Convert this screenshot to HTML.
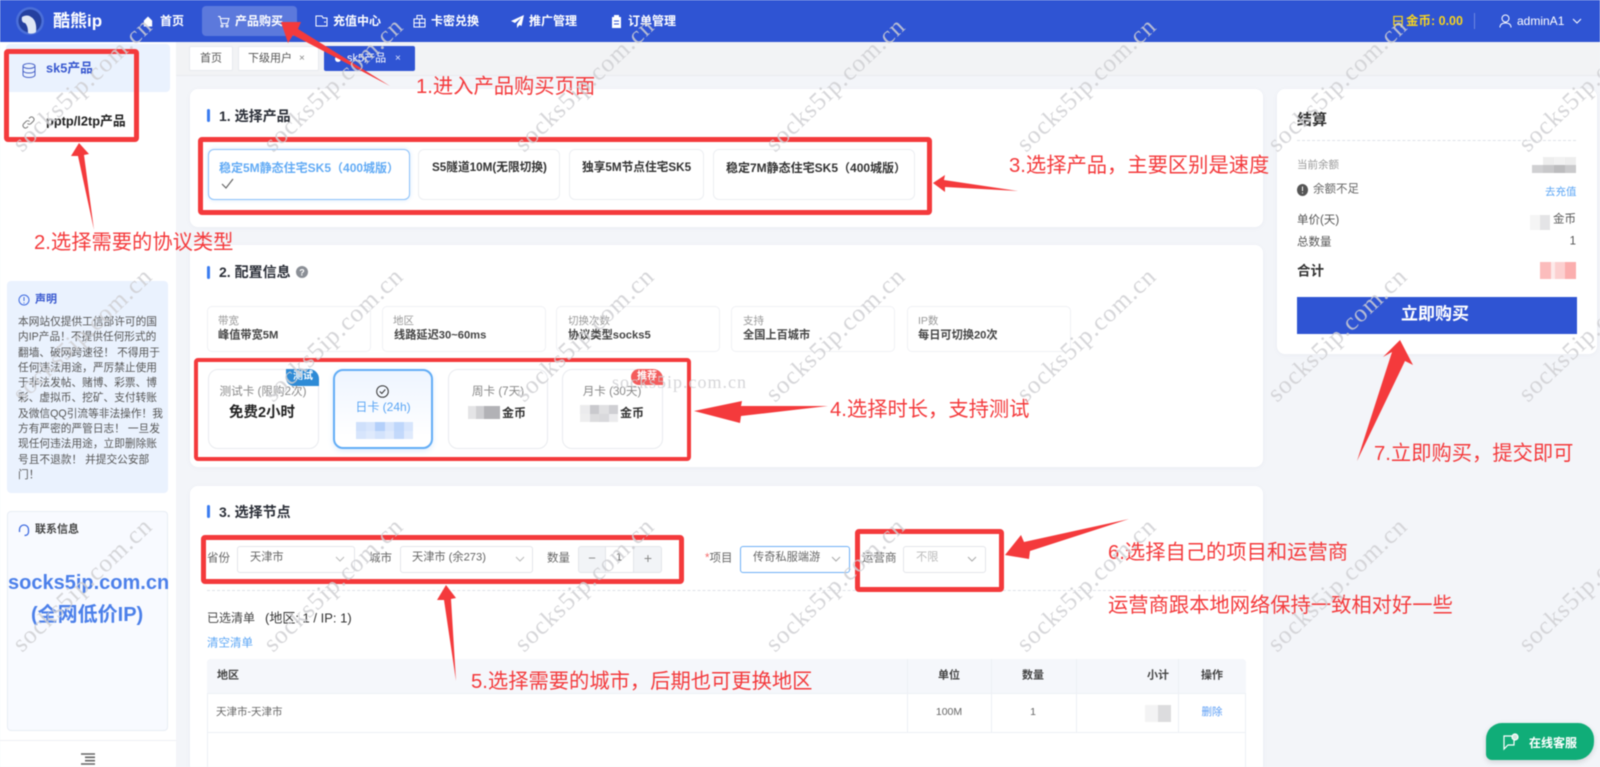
<!DOCTYPE html>
<html lang="zh-CN"><head><meta charset="utf-8"><title>酷熊ip</title>
<style>
*{box-sizing:border-box;margin:0;padding:0}
html,body{width:1600px;height:767px;overflow:hidden;background:#f3f5f9}
body{font-family:"Liberation Sans","Noto Sans CJK SC",sans-serif;color:#333}
#w{position:relative;width:1600px;height:767px;overflow:hidden;filter:blur(.6px)}
.b{position:absolute}
.t{position:absolute;white-space:nowrap;line-height:1;transform:translateY(-50%)}
.c{transform:translate(-50%,-50%)}
.r{transform:translate(-100%,-50%)}
.n{color:#fff;font-size:12px;font-weight:700;top:21px}
.card{position:absolute;background:#fff;border-radius:8px;box-shadow:0 1px 6px rgba(40,60,110,.04)}
.bar{position:absolute;width:3px;height:13px;background:#3b7cf0;border-radius:2px}
.h{font-size:14px;font-weight:700;color:#2b2f38}
.p{position:absolute;background:#fff;border:1px solid #eceef2;border-radius:6px;top:149px;height:51px}
.pt{font-size:11.7px;font-weight:700;color:#333;top:168px}
.i{position:absolute;top:306px;height:46px;width:164px;border:1px solid #f0f1f4;border-radius:5px;background:#fff}
.il{font-size:10.5px;color:#999;top:321px}.iv{font-size:11.2px;font-weight:700;color:#444;top:336px}
.d{position:absolute;top:369px;height:80px;background:#fff;border:1px solid #e9ebef;border-radius:10px}
.dl{font-size:11.6px;color:#888;top:392px}
.s{position:absolute;top:546px;height:27px;background:#fff;border:1px solid #e3e5ea;border-radius:3px}
.lb{font-size:11.5px;color:#666;top:559px}
.st{font-size:11.2px;color:#666;top:558px}
.ch{position:absolute;top:556px}
.a{color:#f43a3c;font-size:20.3px}
.th{font-size:11px;font-weight:700;color:#444;top:676px}
.td{font-size:10.5px;color:#666;top:712px}
.v{position:absolute;background:#edf0f5;width:1px;top:659px;height:108px}
.rr{position:absolute;border:5px solid #f43a3c;border-radius:4px}
.m{position:absolute;display:grid}
.m i{display:block}
.side{font-size:11.5px;color:#555;top:165px}
</style></head><body><div id="w">

<!-- header -->
<div class="b" style="left:0;top:0;width:1600px;height:42px;background:#2f54d3"></div>
<svg class="b" style="left:16px;top:7px" width="28" height="28" viewBox="0 0 28 28"><circle cx="14" cy="14" r="14" fill="#4b6fd8"/><circle cx="14" cy="14" r="11.5" fill="#24409f"/><path d="M6 10c3-2 7-2 9 0 4 2 6 8 5 15-2 2-6 2-8 1 0-5-1-8-3-10-2 0-4-2-3-6z" fill="#dfe7f5"/></svg>
<div class="t" style="left:53px;top:21px;font-size:17px;font-weight:700;color:#fff">酷熊ip</div>
<div class="b" style="left:202px;top:6px;width:95px;height:30px;background:rgba(255,255,255,.22);border-radius:4px"></div>
<svg class="b" style="left:143px;top:16px" width="10" height="11" viewBox="0 0 12 12"><path d="M6 0L11 5V12H1V5z" fill="#fff"/></svg>
<div class="t n" style="left:160px">首页</div>
<svg class="b" style="left:217px;top:15px" width="13" height="13" viewBox="0 0 13 13" fill="none" stroke="#fff" stroke-width="1"><path d="M1 1.5h2l1.5 7h6L12 3.5H3.5"/><circle cx="5" cy="11" r="1"/><circle cx="10" cy="11" r="1"/></svg>
<div class="t n" style="left:235px">产品购买</div>
<svg class="b" style="left:315px;top:15px" width="13" height="12" viewBox="0 0 13 12" fill="none" stroke="#fff" stroke-width="1"><path d="M1 1h6l1 2h4v8H1z"/><path d="M9 7h2"/></svg>
<div class="t n" style="left:333px">充值中心</div>
<svg class="b" style="left:413px;top:14px" width="13" height="14" viewBox="0 0 13 14" fill="none" stroke="#fff" stroke-width="1"><path d="M1 5h11v8H1zM1 9h11M6.500 5v8M4 5V1.500h5V5"/></svg>
<div class="t n" style="left:431px">卡密兑换</div>
<svg class="b" style="left:511px;top:15px" width="13" height="13" viewBox="0 0 13 13"><path d="M13 0L0 6l4 2 6-5-4 6v4l2.500-3 2 1z" fill="#fff"/></svg>
<div class="t n" style="left:529px">推广管理</div>
<svg class="b" style="left:611px;top:15px" width="11" height="13" viewBox="0 0 11 13"><path d="M1 2h9v11H1z" fill="#fff"/><path d="M3 0h5v2H3z" fill="#fff"/><path d="M3 6h5M3 9h5" stroke="#2f54d3"/></svg>
<div class="t n" style="left:628px">订单管理</div>
<svg class="b" style="left:1392px;top:15px" width="12" height="14" viewBox="0 0 13 14" fill="none" stroke="#f6d31f" stroke-width="1.300"><path d="M2 1h9v9H2zM2 6h9M3 10v3M10 10v3"/></svg>
<div class="t" style="left:1406px;top:21px;font-size:12.5px;font-weight:700;color:#f6d31f">金币: 0.00</div>
<div class="b" style="left:1474px;top:13px;width:1px;height:16px;background:rgba(255,255,255,.3)"></div>
<svg class="b" style="left:1499px;top:14px" width="13" height="14" viewBox="0 0 13 14" fill="none" stroke="#fff"><circle cx="6.500" cy="4.500" r="3.500"/><path d="M1 13.500c0-3 2-4.500 5.500-4.500s5.500 1.500 5.500 4.500"/></svg>
<div class="t" style="left:1517px;top:21px;font-size:12px;color:#fff">adminA1</div>
<svg class="b" style="left:1572px;top:18px" width="10" height="7" viewBox="0 0 10 7" fill="none" stroke="#fff"><path d="M1 1l4 4 4-4"/></svg>

<!-- sidebar -->
<div class="b" style="left:0;top:42px;width:176px;height:725px;background:#fff"></div>
<div class="b" style="left:6px;top:44px;width:164px;height:48px;background:#eaf2fe;border-radius:4px"></div>
<svg class="b" style="left:22px;top:63px" width="14" height="15" viewBox="0 0 14 15" fill="none" stroke="#4a64c8"><ellipse cx="7" cy="3" rx="6" ry="2.500"/><path d="M1 3v9c0 1.400 2.700 2.500 6 2.500s6-1.100 6-2.500V3M1 7.500c0 1.400 2.700 2.500 6 2.500s6-1.100 6-2.500"/></svg>
<div class="t" style="left:46px;top:69px;font-size:12.8px;font-weight:700;color:#3858cf">sk5产品</div>
<svg class="b" style="left:22px;top:116px" width="13" height="13" viewBox="0 0 13 13" fill="none" stroke="#777"><path d="M5.500 7.500a2.500 2.500 0 0 0 3.500 0l2.500-2.500A2.500 2.500 0 0 0 8 1.500L7 2.500M7.500 5.500a2.500 2.500 0 0 0-3.500 0L1.500 8A2.500 2.500 0 0 0 5 11.500l1-1"/></svg>
<div class="t" style="left:46px;top:122px;font-size:12.8px;font-weight:700;color:#222">pptp/l2tp产品</div>

<div class="b" style="left:7px;top:281px;width:161px;height:212px;background:#eaf2fe;border-radius:4px"></div>
<svg class="b" style="left:18px;top:294px" width="12" height="12" viewBox="0 0 12 12" fill="none" stroke="#3f6be0"><circle cx="6" cy="6" r="5"/><path d="M6 3v4M6 8.500v1"/></svg>
<div class="t" style="left:35px;top:300px;font-size:11px;font-weight:700;color:#3858cf">声明</div>
<div class="b" style="left:18px;top:315px;font-size:10.7px;line-height:15.3px;color:#555;white-space:nowrap">本网站仅提供工信部许可的国<br>内IP产品！不提供任何形式的<br>翻墙、破网跨速径！ 不得用于<br>任何违法用途，严厉禁止使用<br>于非法发帖、赌博、彩票、博<br>彩、虚拟币、挖矿、支付转账<br>及微信QQ引流等非法操作！我<br>方有严密的严管日志！ 一旦发<br>现任何违法用途，立即删除账<br>号且不退款！ 并提交公安部<br>门！</div>

<div class="b" style="left:7px;top:511px;width:161px;height:220px;background:#f8faff;border:1px solid #e8edf4;border-radius:4px"></div>
<svg class="b" style="left:18px;top:524px" width="12" height="13" viewBox="0 0 12 13" fill="none" stroke="#3f6be0" stroke-width="1.300"><path d="M1.500 8V5.500a4.500 4.500 0 0 1 9 0V8M10.500 8c0 2-1.500 3.500-4 3.500"/></svg>
<div class="t" style="left:35px;top:530px;font-size:11px;font-weight:700;color:#444">联系信息</div>
<div class="t" style="left:8px;top:583px;font-size:20px;font-weight:700;color:#4c80ea">socks5ip.com.cn</div>
<div class="t" style="left:31px;top:615px;font-size:20px;font-weight:700;color:#4c80ea">(全网低价IP)</div>
<div class="b" style="left:0;top:740px;width:176px;height:1px;background:#eef0f4"></div>
<svg class="b" style="left:81px;top:753px" width="14" height="12" viewBox="0 0 14 12" fill="none" stroke="#666" stroke-width="1.600"><path d="M0 1h14M4 4.300h10M4 7.700h10M0 11h14"/></svg>

<!-- tabs -->
<div class="b" style="left:176px;top:42px;width:1424px;height:34px;background:#f2f3f5;border-bottom:1px solid #e9ebef"></div>
<div class="b" style="left:189px;top:46px;width:44px;height:25px;background:#fff;border:1px solid #e8eaee;border-radius:2px"></div>
<div class="t" style="left:200px;top:59px;font-size:11px;color:#555">首页</div>
<div class="b" style="left:238px;top:46px;width:81px;height:25px;background:#fff;border:1px solid #e8eaee;border-radius:2px"></div>
<div class="t" style="left:248px;top:59px;font-size:11px;color:#555">下级用户</div>
<div class="t" style="left:299px;top:59px;font-size:10px;color:#888">×</div>
<div class="b" style="left:324px;top:46px;width:91px;height:25px;background:#2f54d3;border-radius:2px"></div>
<div class="b" style="left:335px;top:56px;width:6px;height:6px;border-radius:50%;background:#fff"></div>
<div class="t" style="left:347px;top:59px;font-size:11px;color:#fff">sk5产品</div>
<div class="t" style="left:395px;top:59px;font-size:10px;color:#dfe5fb">×</div>

<!-- card 1 -->
<div class="card" style="left:190px;top:89px;width:1073px;height:138px"></div>
<div class="bar" style="left:207px;top:109px"></div>
<div class="t h" style="left:219px;top:116px">1. 选择产品</div>
<div class="p" style="left:208px;width:202px;border:1.500px solid #8cc2fa;box-shadow:0 0 4px rgba(90,165,245,.25)"></div>
<div class="t pt" style="left:219px;color:#62abf5;font-size:12px">稳定5M静态住宅SK5（400城版）</div>
<svg class="b" style="left:221px;top:178px" width="13" height="11" viewBox="0 0 13 11" fill="none" stroke="#666" stroke-width="1.200"><path d="M1 6l4 4 7-9"/></svg>
<div class="p" style="left:418px;width:142px"></div><div class="t pt" style="left:432px">S5隧道10M(无限切换)</div>
<div class="p" style="left:569px;width:135px"></div><div class="t pt" style="left:582px">独享5M节点住宅SK5</div>
<div class="p" style="left:713px;width:202px"></div><div class="t pt" style="left:726px;font-size:12px">稳定7M静态住宅SK5（400城版）</div>

<!-- card 2 -->
<div class="card" style="left:190px;top:245px;width:1073px;height:222px"></div>
<div class="bar" style="left:207px;top:266px"></div>
<div class="t h" style="left:219px;top:272px">2. 配置信息</div>
<svg class="b" style="left:296px;top:266px" width="12" height="12" viewBox="0 0 12 12"><circle cx="6" cy="6" r="6" fill="#8b8f96"/><text x="6" y="9.500" font-size="9" text-anchor="middle" fill="#fff" font-family="Liberation Sans" font-weight="700">?</text></svg>
<div class="i" style="left:207px"></div><div class="t il" style="left:218px">带宽</div><div class="t iv" style="left:218px">峰值带宽5M</div>
<div class="i" style="left:382px"></div><div class="t il" style="left:393px">地区</div><div class="t iv" style="left:394px">线路延迟30~60ms</div>
<div class="i" style="left:556px"></div><div class="t il" style="left:568px">切换次数</div><div class="t iv" style="left:568px">协议类型socks5</div>
<div class="i" style="left:731px"></div><div class="t il" style="left:743px">支持</div><div class="t iv" style="left:743px">全国上百城市</div>
<div class="i" style="left:907px"></div><div class="t il" style="left:918px">IP数</div><div class="t iv" style="left:918px">每日可切换20次</div>

<div class="d" style="left:208px;width:111px"></div>
<div class="b" style="left:286px;top:369px;width:33px;height:17px;background:#2e8bd6;border-radius:0 10px 0 8px"></div>
<div class="t c" style="left:303px;top:377px;font-size:10px;font-weight:700;color:#fff">测试</div>
<div class="t c dl" style="left:263px">测试卡 (限购2次)</div>
<div class="t c" style="left:262px;top:413px;font-size:14.500px;font-weight:700;color:#222">免费2小时</div>

<div class="d" style="left:333px;width:100px;border:2px solid #62adf6;background:linear-gradient(180deg,#eef5ff,#fff 85%);box-shadow:0 2px 6px rgba(90,160,245,.2)"></div>
<svg class="b" style="left:376px;top:385px" width="13" height="13" viewBox="0 0 13 13" fill="none" stroke="#333"><circle cx="6.500" cy="6.500" r="5.800"/><path d="M3.800 6.500l2 2 3.500-4"/></svg>
<div class="t c" style="left:383px;top:407px;font-size:12px;color:#5aa5f5">日卡 (24h)</div>
<div class="m" style="left:356px;top:422px;width:57px;height:17px;grid-template-columns:repeat(6,1fr);grid-template-rows:repeat(2,1fr)"><i style="background:#cfe0fb"></i><i style="background:#d7e5fc"></i><i style="background:#b4d0fa"></i><i style="background:#d7e5fc"></i><i style="background:#bfd7fb"></i><i style="background:#d7e5fc"></i><i style="background:#d7e5fc"></i><i style="background:#dfeafc"></i><i style="background:#d3e3fc"></i><i style="background:#dfeafc"></i><i style="background:#c3d9fb"></i><i style="background:#dfeafc"></i></div>

<div class="d" style="left:448px;width:100px"></div>
<div class="t c dl" style="left:498px">周卡 (7天)</div>
<div class="m" style="left:468px;top:406px;width:32px;height:13px;grid-template-columns:1fr 1fr 2fr"><i style="background:#e4e4e6"></i><i style="background:#cfcfd2"></i><i style="background:#b2b2b6"></i></div>
<div class="t" style="left:502px;top:413px;font-size:12px;font-weight:700;color:#333">金币</div>

<div class="d" style="left:562px;width:101px"></div>
<div class="b" style="left:631px;top:369px;width:32px;height:16px;background:#f45c5c;border-radius:8px 10px 0 8px"></div>
<div class="t c" style="left:647px;top:377px;font-size:10px;font-weight:700;color:#fff">推荐</div>
<div class="t c dl" style="left:612px">月卡 (30天)</div>
<div class="m" style="left:580px;top:405px;width:38px;height:17px;grid-template-columns:repeat(4,1fr);grid-template-rows:1fr 1fr"><i style="background:#ebebed"></i><i style="background:#c9c9cd"></i><i style="background:#e0e0e2"></i><i style="background:#cfcfd3"></i><i style="background:#eeeeef"></i><i style="background:#dcdcde"></i><i style="background:#d9d9dc"></i><i style="background:#ebebed"></i></div>
<div class="t" style="left:620px;top:413px;font-size:12px;font-weight:700;color:#333">金币</div>

<!-- card 3 -->
<div class="card" style="left:190px;top:486px;width:1073px;height:300px"></div>
<div class="bar" style="left:207px;top:505px"></div>
<div class="t h" style="left:219px;top:512px">3. 选择节点</div>
<div class="t lb" style="left:207px">省份</div>
<div class="s" style="left:237px;width:118px"></div><div class="t st" style="left:250px">天津市</div>
<svg class="ch" style="left:335px" width="10" height="7" viewBox="0 0 10 7" fill="none" stroke="#bbb"><path d="M1 1l4 4 4-4"/></svg>
<div class="t lb" style="left:369px">城市</div>
<div class="s" style="left:400px;width:133px"></div><div class="t st" style="left:412px">天津市 (余273)</div>
<svg class="ch" style="left:515px" width="10" height="7" viewBox="0 0 10 7" fill="none" stroke="#bbb"><path d="M1 1l4 4 4-4"/></svg>
<div class="t lb" style="left:547px">数量</div>
<div class="s" style="left:578px;width:84px;background:#f2f4f7"></div>
<div class="b" style="left:605px;top:547px;width:29px;height:25px;background:#fff;border-left:1px solid #e3e5ea;border-right:1px solid #e3e5ea"></div>
<div class="t c" style="left:592px;top:558px;font-size:13px;color:#888">−</div>
<div class="t c" style="left:619px;top:558px;font-size:11px;color:#666">1</div>
<div class="t c" style="left:648px;top:558px;font-size:14px;color:#888">+</div>
<div class="t lb" style="left:705px"><span style="color:#f56c6c">*</span>项目</div>
<div class="s" style="left:740px;width:110px;border:1px solid #6fb1f7"></div><div class="t st" style="left:753px">传奇私服端游</div>
<svg class="ch" style="left:831px" width="10" height="7" viewBox="0 0 10 7" fill="none" stroke="#aaa"><path d="M1 1l4 4 4-4"/></svg>
<div class="t lb" style="left:862px">运营商</div>
<div class="s" style="left:903px;width:83px"></div><div class="t st" style="left:916px;color:#bbb">不限</div>
<svg class="ch" style="left:967px" width="10" height="7" viewBox="0 0 10 7" fill="none" stroke="#aaa"><path d="M1 1l4 4 4-4"/></svg>
<div class="b" style="left:207px;top:590px;width:1039px;border-top:1px dashed #dfe2e8"></div>
<div class="t" style="left:207px;top:618px;font-size:12px;color:#444">已选清单</div>
<div class="t" style="left:265px;top:618px;font-size:13px;color:#333">(地区: 1 / IP: 1)</div>
<div class="t" style="left:207px;top:644px;font-size:11.500px;color:#5aa5f5">清空清单</div>

<div class="b" style="left:207px;top:659px;width:1039px;height:120px;background:#fff;border:1px solid #edf0f5;border-radius:4px 4px 0 0"></div>
<div class="b" style="left:207px;top:659px;width:1039px;height:35px;background:#f5f7fb;border-bottom:1px solid #edf0f5;border-radius:4px 4px 0 0"></div>
<div class="b" style="left:207px;top:732px;width:1039px;height:1px;background:#edf0f5"></div>
<div class="v" style="left:907px;height:73px"></div><div class="v" style="left:991px;height:73px"></div><div class="v" style="left:1076px;height:73px"></div><div class="v" style="left:1178px;height:73px"></div>
<div class="t th" style="left:217px">地区</div>
<div class="t c th" style="left:949px">单位</div><div class="t c th" style="left:1033px">数量</div>
<div class="t r th" style="left:1169px">小计</div><div class="t c th" style="left:1212px">操作</div>
<div class="t td" style="left:216px">天津市-天津市</div>
<div class="t c td" style="left:949px">100M</div><div class="t c td" style="left:1033px">1</div>
<div class="m" style="left:1145px;top:705px;width:26px;height:17px;grid-template-columns:1fr 1fr"><i style="background:#f3f3f4"></i><i style="background:#dcdcde"></i></div>
<div class="t c td" style="left:1212px;color:#5a9df5">删除</div>

<!-- checkout -->
<div class="card" style="left:1277px;top:89px;width:320px;height:265px"></div>
<div class="t" style="left:1297px;top:120px;font-size:15px;font-weight:700;color:#333">结算</div>
<div class="b" style="left:1297px;top:140px;width:279px;border-top:1px dashed #dfe2e8"></div>
<div class="t" style="left:1297px;top:165px;font-size:10.5px;color:#999">当前余额</div>
<div class="m" style="left:1532px;top:157px;width:44px;height:16px;grid-template-columns:repeat(4,1fr);grid-template-rows:1fr 1fr"><i style="background:#fff"></i><i style="background:#eee"></i><i style="background:#f2f2f2"></i><i style="background:#eee"></i><i style="background:#d0d0d2"></i><i style="background:#c8c8ca"></i><i style="background:#bcbcbe"></i><i style="background:#cacacc"></i></div>
<svg class="b" style="left:1297px;top:184px" width="11" height="12" viewBox="0 0 11 12"><ellipse cx="5.500" cy="6" rx="5.500" ry="6" fill="#555"/><path d="M5.500 2.500v4.500M5.500 8.500v1" stroke="#fff"/></svg>
<div class="t" style="left:1313px;top:190px;font-size:11.500px;color:#666">余额不足</div>
<div class="t" style="left:1545px;top:192px;font-size:10.500px;color:#5aa5f5">去充值</div>
<div class="t side" style="left:1297px;top:221px">单价(天)</div>
<div class="m" style="left:1530px;top:215px;width:20px;height:15px;grid-template-columns:1fr 1fr"><i style="background:#f5f5f5"></i><i style="background:#e4e4e6"></i></div>
<div class="t side r" style="left:1576px;top:220px">金币</div>
<div class="t side" style="left:1297px;top:243px">总数量</div>
<div class="t side r" style="left:1576px;top:242px">1</div>
<div class="t" style="left:1297px;top:271px;font-size:13.500px;font-weight:700;color:#333">合计</div>
<div class="m" style="left:1540px;top:262px;width:36px;height:17px;grid-template-columns:1fr .4fr 1fr 1fr"><i style="background:#fbbcbc"></i><i style="background:#fdeaea"></i><i style="background:#fcd0d0"></i><i style="background:#fbaeae"></i></div>
<div class="b" style="left:1297px;top:297px;width:280px;height:37px;background:#2f54d3"></div>
<div class="t c" style="left:1435px;top:314px;font-size:17px;font-weight:700;color:#fff">立即购买</div>

<!-- chat -->
<div class="b" style="left:1486px;top:723px;width:108px;height:37px;background:#10ad78;border-radius:16px 16px 18px 6px;box-shadow:0 2px 6px rgba(0,0,0,.15)"></div>
<svg class="b" style="left:1502px;top:733px" width="18" height="18" viewBox="0 0 18 18" fill="none" stroke="#fff" stroke-width="1.200"><path d="M2 3h10v9H6l-4 4z"/><circle cx="13" cy="4" r="3" fill="#cfe8de"/></svg>
<div class="t" style="left:1529px;top:743px;font-size:12px;font-weight:700;color:#fff">在线客服</div>

<!-- red annotation boxes -->
<div class="rr" style="left:4px;top:49px;width:135px;height:93px"></div>
<div class="rr" style="left:198px;top:137px;width:734px;height:78px"></div>
<div class="rr" style="left:194px;top:358px;width:497px;height:103px;border-width:4.500px"></div>
<div class="rr" style="left:201px;top:535px;width:483px;height:49px"></div>
<div class="rr" style="left:855px;top:529px;width:149px;height:63px"></div>

<svg class="b" style="left:0;top:0" width="1600" height="767" fill="#f43a3c">
<polygon points="281,22 301,22 298,29 390,86 293,35 288,43"/>
<polygon points="79,143 89,154 84,155 94,230 78,156 71,156"/>
<polygon points="933,183 945,175 944,180 1018,191 945,187 945,192"/>
<polygon points="694,411 742,401 741,406 828,406 741,416 740,423"/>
<polygon points="446,585 456,598 451,599 456,681 444,600 437,600"/>
<polygon points="1005,555 1021,535 1024,542 1129,519 1030,551 1029,559"/>
<polygon points="1400,340 1413,365 1405,361 1357,461 1392,352 1383,357"/>
</svg>
<div class="t a" style="left:416px;top:87px">1.进入产品购买页面</div>
<div class="t a" style="left:34px;top:243px">2.选择需要的协议类型</div>
<div class="t a" style="left:1009px;top:166px">3.选择产品，主要区别是速度</div>
<div class="t a" style="left:830px;top:410px">4.选择时长，支持测试</div>
<div class="t a" style="left:471px;top:682px">5.选择需要的城市，后期也可更换地区</div>
<div class="t a" style="left:1108px;top:553px">6.选择自己的项目和运营商</div>
<div class="t a" style="left:1108px;top:606px">运营商跟本地网络保持一致相对好一些</div>
<div class="t a" style="left:1374px;top:454px">7.立即购买，提交即可</div>

<!-- watermark -->
<svg class="b" style="left:0;top:0" width="1600" height="767" font-family="Liberation Serif,serif" font-size="25" letter-spacing="1" fill="#cfcfd2" fill-opacity=".85">
<text x="22" y="153" transform="rotate(-43.500 22 153)">socks5ip.com.cn</text>
<text x="273" y="153" transform="rotate(-43.500 273 153)">socks5ip.com.cn</text>
<text x="524" y="153" transform="rotate(-43.500 524 153)">socks5ip.com.cn</text>
<text x="775" y="153" transform="rotate(-43.500 775 153)">socks5ip.com.cn</text>
<text x="1026" y="153" transform="rotate(-43.500 1026 153)">socks5ip.com.cn</text>
<text x="1277" y="153" transform="rotate(-43.500 1277 153)">socks5ip.com.cn</text>
<text x="1528" y="153" transform="rotate(-43.500 1528 153)">socks5ip.com.cn</text>
<text x="22" y="403" transform="rotate(-43.500 22 403)">socks5ip.com.cn</text>
<text x="273" y="403" transform="rotate(-43.500 273 403)">socks5ip.com.cn</text>
<text x="524" y="403" transform="rotate(-43.500 524 403)">socks5ip.com.cn</text>
<text x="775" y="403" transform="rotate(-43.500 775 403)">socks5ip.com.cn</text>
<text x="1026" y="403" transform="rotate(-43.500 1026 403)">socks5ip.com.cn</text>
<text x="1277" y="403" transform="rotate(-43.500 1277 403)">socks5ip.com.cn</text>
<text x="1528" y="403" transform="rotate(-43.500 1528 403)">socks5ip.com.cn</text>
<text x="22" y="653" transform="rotate(-43.500 22 653)">socks5ip.com.cn</text>
<text x="273" y="653" transform="rotate(-43.500 273 653)">socks5ip.com.cn</text>
<text x="524" y="653" transform="rotate(-43.500 524 653)">socks5ip.com.cn</text>
<text x="775" y="653" transform="rotate(-43.500 775 653)">socks5ip.com.cn</text>
<text x="1026" y="653" transform="rotate(-43.500 1026 653)">socks5ip.com.cn</text>
<text x="1277" y="653" transform="rotate(-43.500 1277 653)">socks5ip.com.cn</text>
<text x="1528" y="653" transform="rotate(-43.500 1528 653)">socks5ip.com.cn</text>
<text x="612" y="388" font-size="18">socks5ip.com.cn</text>
</svg>
</div></body></html>
